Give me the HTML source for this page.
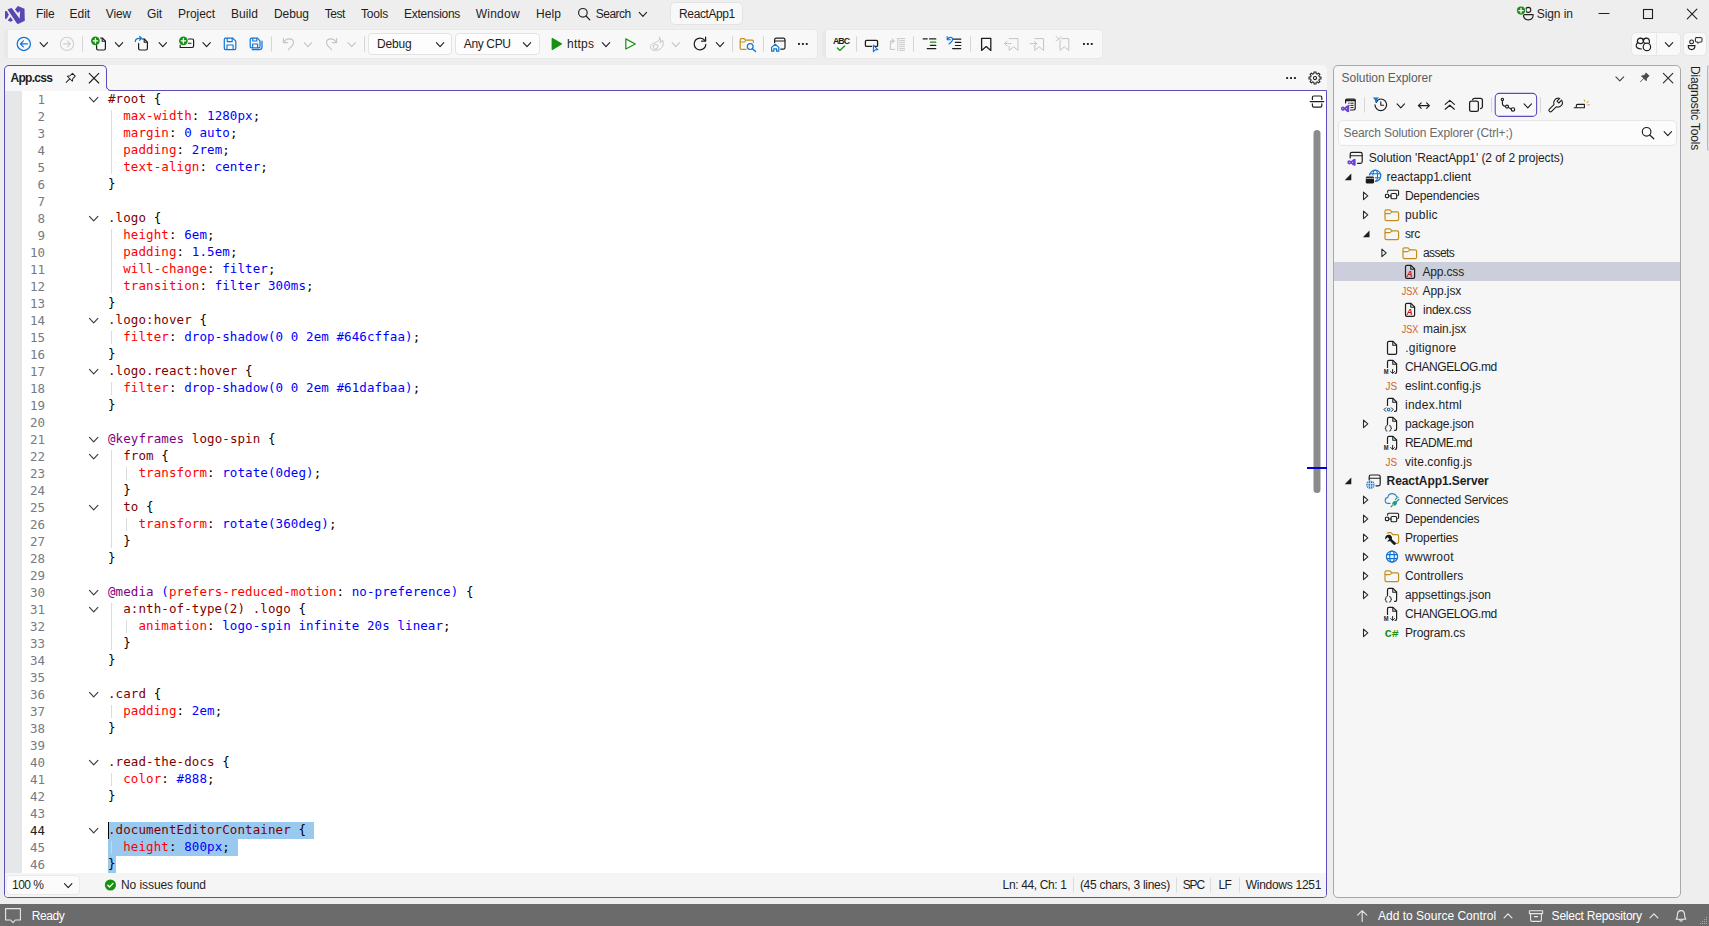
<!DOCTYPE html>
<html lang="en">
<head>
<meta charset="utf-8">
<title>ReactApp1 - App.css</title>
<style>
*{box-sizing:border-box;margin:0;padding:0}
html,body{width:1709px;height:926px;overflow:hidden}
body{position:relative;background:#eeeeee;font-family:"Liberation Sans",sans-serif;font-size:12px;color:#1e1e1e;line-height:1}
.abs{position:absolute}
#ico{position:absolute;left:0;top:0;overflow:visible}
.t{position:absolute;white-space:nowrap;line-height:16px;height:16px;font-size:12px}
.tb{position:absolute;top:30px;height:28px;background:#f8f8f8;box-shadow:0 0 0 1px #e9e9e9;border-radius:3px}
.grip{position:absolute;top:30px;height:28px;width:3px;background:#e8e8e8;border-radius:3px 0 0 3px}
.combo{position:absolute;top:33px;height:22px;background:#fdfdfd;border:1px solid #e4e4e4;border-radius:4px}
#well{left:4px;top:65px;width:1323px;height:833px;background:#f7f7f7;border-radius:5px}
#edframe{left:4px;top:90px;width:1323px;height:808px;border:1px solid #5a4ebc;border-radius:0 0 4px 4px;background:#fff}
#tab{left:4px;top:65px;width:103px;height:26px;background:#f7f7f7;border:1px solid #5a4ebc;border-bottom:none;border-radius:5px 5px 0 0}
#tabfoot{left:106px;top:86px;width:5px;height:5px;overflow:hidden}
#tabfoot i{position:absolute;left:0;top:-5px;width:10px;height:10px;border:1px solid #5a4ebc;border-radius:5px;box-shadow:0 0 0 5px #f7f7f7}
#gutter{left:5px;top:91px;width:17px;height:782px;background:#e6e7e8}
#edstatus{left:5px;top:873px;width:1321px;height:24px;background:#f5f5f5;border-radius:0 0 3px 3px}
#zoom{left:6px;top:875px;width:74px;height:20px;background:#fbfbfb;border:1px solid #e9e9e9;border-radius:4px}
#code,#lnums{font-family:"DejaVu Sans Mono","Liberation Mono",monospace;font-size:12.5px;letter-spacing:0.09px;line-height:17px;white-space:pre}
#code{left:108px;top:89.5px;color:#000}
#lnums{left:0;top:90.5px;width:45.2px;text-align:right;color:#747b83}
#lnums b{font-weight:normal;color:#1e1e1e}
.s{color:#800000}.p{color:#ff0000}.v{color:#0000ff}.a{color:#800080}
.sel{position:absolute;background:#99c9ef}
.guide{position:absolute;width:1px;background:#dcdcdc}
#sx{left:1333px;top:65px;width:348px;height:833px;background:#f6f6f6;border:1px solid #a9a9a9;border-radius:5px}
#sxsearch{left:1338px;top:120px;width:339px;height:26px;background:#fcfcfc;border:1px solid #e6e6e6;border-radius:5px}
#sxsel{left:1334px;top:262px;width:346px;height:19px;background:#cccedb}
#diag{left:1688px;top:66px;writing-mode:vertical-rl;font-size:12px;line-height:14px;color:#1e1e1e;white-space:nowrap;letter-spacing:-0.2px}
#sb{left:0;top:904px;width:1709px;height:22px;background:#6b6b6b}
</style>
</head>
<body>
<!-- menu: project name pill -->
<div class="abs" style="left:670px;top:2px;width:73px;height:23px;background:#f8f8f8;border:1px solid #e3e3e3;border-radius:5px"></div>
<!-- toolbars -->
<div class="tb" style="left:5px;width:812px"></div><div class="grip" style="left:5px"></div>
<div class="tb" style="left:823px;width:279px"></div><div class="grip" style="left:823px"></div>
<div class="combo" style="left:368px;width:84px"></div>
<div class="combo" style="left:455px;width:85px"></div>
<div class="abs" style="left:1631px;top:32px;width:50px;height:24px;background:#f9f9f9;border:1px solid #e6e6e6;border-radius:5px"></div>
<div class="abs" style="left:1656px;top:33px;width:1px;height:22px;background:#e6e6e6"></div>
<div class="abs" style="left:1683px;top:32px;width:24px;height:24px;background:#f9f9f9;border:1px solid #e6e6e6;border-radius:5px"></div>
<!-- document well -->
<div class="abs" id="well"></div>
<div class="abs" id="edframe"></div>
<div class="abs" id="tab"></div>
<div class="abs" id="tabfoot"><i></i></div>
<div class="abs" id="gutter"></div>
<div class="abs" id="edstatus"></div>
<div class="abs" id="zoom"></div>
<div class="sel" style="left:108px;top:822px;width:206px;height:17px"></div>
<div class="sel" style="left:108px;top:839px;width:130px;height:17px"></div>
<div class="sel" style="left:108px;top:856px;width:8px;height:17px"></div>
<div class="abs" style="left:108px;top:822px;width:1px;height:17px;background:#000"></div>
<div class="guide" style="left:111px;top:110px;height:64px"></div>
<div class="guide" style="left:111px;top:229px;height:64px"></div>
<div class="guide" style="left:111px;top:331px;height:13px"></div>
<div class="guide" style="left:111px;top:382px;height:13px"></div>
<div class="guide" style="left:111px;top:450px;height:98px"></div>
<div class="guide" style="left:126px;top:467px;height:13px"></div>
<div class="guide" style="left:126px;top:518px;height:13px"></div>
<div class="guide" style="left:111px;top:603px;height:47px"></div>
<div class="guide" style="left:126px;top:620px;height:13px"></div>
<div class="guide" style="left:111px;top:705px;height:13px"></div>
<div class="guide" style="left:111px;top:773px;height:13px"></div>
<div class="guide" style="left:111px;top:841px;height:13px;background:#c4d8e8"></div>
<div class="abs" id="lnums">1
2
3
4
5
6
7
8
9
10
11
12
13
14
15
16
17
18
19
20
21
22
23
24
25
26
27
28
29
30
31
32
33
34
35
36
37
38
39
40
41
42
43
<b>44</b>
45
46</div>
<div class="abs" id="code"><span class="s">#root</span> {
  <span class="p">max-width</span>: <span class="v">1280px</span>;
  <span class="p">margin</span>: <span class="v">0 auto</span>;
  <span class="p">padding</span>: <span class="v">2rem</span>;
  <span class="p">text-align</span>: <span class="v">center</span>;
}

<span class="s">.logo</span> {
  <span class="p">height</span>: <span class="v">6em</span>;
  <span class="p">padding</span>: <span class="v">1.5em</span>;
  <span class="p">will-change</span>: <span class="v">filter</span>;
  <span class="p">transition</span>: <span class="v">filter 300ms</span>;
}
<span class="s">.logo:hover</span> {
  <span class="p">filter</span>: <span class="v">drop-shadow(0 0 2em #646cffaa)</span>;
}
<span class="s">.logo.react:hover</span> {
  <span class="p">filter</span>: <span class="v">drop-shadow(0 0 2em #61dafbaa)</span>;
}

<span class="a">@keyframes</span> <span class="s">logo-spin</span> {
  <span class="s">from</span> {
    <span class="p">transform</span>: <span class="v">rotate(0deg)</span>;
  }
  <span class="s">to</span> {
    <span class="p">transform</span>: <span class="v">rotate(360deg)</span>;
  }
}

<span class="a">@media</span> <span class="v">(</span><span class="p">prefers-reduced-motion</span>: <span class="v">no-preference)</span> {
  <span class="s">a:nth-of-type(2) .logo</span> {
    <span class="p">animation</span>: <span class="v">logo-spin infinite 20s linear</span>;
  }
}

<span class="s">.card</span> {
  <span class="p">padding</span>: <span class="v">2em</span>;
}

<span class="s">.read-the-docs</span> {
  <span class="p">color</span>: <span class="v">#888</span>;
}

<span class="s">.documentEditorContainer</span> {
  <span class="p">height</span>: <span class="v">800px</span>;
}</div>

<!-- solution explorer -->
<div class="abs" id="sx"></div>
<div class="abs" id="sxsearch"></div>
<div class="abs" id="sxsel"></div>
<div class="abs" id="diag">Diagnostic Tools</div>
<div class="abs" style="left:1707px;top:65px;width:2px;height:86px;background:#dddddd;border-left:1px solid #b9b9b9;border-radius:2px 0 0 2px"></div>
<!-- status bar -->
<div class="abs" id="sb"></div>
<!-- text -->
<span class="t" style="left:36.1px;top:6.3px;letter-spacing:-0.286px">File</span>
<span class="t" style="left:69.6px;top:6.3px;letter-spacing:-0.047px">Edit</span>
<span class="t" style="left:105.7px;top:6.3px;letter-spacing:-0.099px">View</span>
<span class="t" style="left:147.0px;top:6.3px;letter-spacing:-0.081px">Git</span>
<span class="t" style="left:178.0px;top:6.3px;letter-spacing:-0.051px">Project</span>
<span class="t" style="left:230.9px;top:6.3px;letter-spacing:0.062px">Build</span>
<span class="t" style="left:274.1px;top:6.3px;letter-spacing:-0.135px">Debug</span>
<span class="t" style="left:324.8px;top:6.3px;letter-spacing:-0.479px">Test</span>
<span class="t" style="left:361.0px;top:6.3px;letter-spacing:-0.203px">Tools</span>
<span class="t" style="left:404.0px;top:6.3px;letter-spacing:-0.260px">Extensions</span>
<span class="t" style="left:475.7px;top:6.3px;letter-spacing:0.252px">Window</span>
<span class="t" style="left:536.1px;top:6.3px;letter-spacing:0.028px">Help</span>
<span class="t" style="left:595.8px;top:6.3px;letter-spacing:-0.522px">Search</span>
<span class="t" style="left:679.1px;top:6.3px;letter-spacing:-0.397px">ReactApp1</span>
<span class="t" style="left:1536.8px;top:6.3px;letter-spacing:-0.100px">Sign in</span>
<span class="t" style="left:376.9px;top:36.3px;letter-spacing:-0.135px">Debug</span>
<span class="t" style="left:463.8px;top:36.3px;letter-spacing:-0.366px">Any CPU</span>
<span class="t" style="left:567.1px;top:36.3px;letter-spacing:0.197px">https</span>
<span class="t" style="left:833.0px;top:33.2px;letter-spacing:-0.983px;font-size:8.8px;font-weight:bold">ABC</span>
<span class="t" style="left:10.5px;top:69.7px;letter-spacing:-0.712px;font-weight:bold">App.css</span>
<span class="t" style="left:1341.6px;top:69.6px;letter-spacing:-0.052px;color:#5c5c5c">Solution Explorer</span>
<span class="t" style="left:1343.5px;top:124.7px;letter-spacing:-0.121px;color:#6a6a6a">Search Solution Explorer (Ctrl+;)</span>
<span class="t" style="left:12.0px;top:876.6px;letter-spacing:-0.526px">100 %</span>
<span class="t" style="left:121.0px;top:876.6px;letter-spacing:-0.077px">No issues found</span>
<span class="t" style="left:1002.6px;top:876.6px;letter-spacing:-0.363px">Ln: 44, Ch: 1</span>
<span class="t" style="left:1079.9px;top:876.6px;letter-spacing:-0.283px">(45 chars, 3 lines)</span>
<span class="t" style="left:1182.7px;top:876.6px;letter-spacing:-1.129px">SPC</span>
<span class="t" style="left:1218.6px;top:876.6px;letter-spacing:-0.658px">LF</span>
<span class="t" style="left:1245.7px;top:876.6px;letter-spacing:-0.277px">Windows 1251</span>
<span class="t" style="left:31.8px;top:907.6px;letter-spacing:-0.438px;color:#ffffff">Ready</span>
<span class="t" style="left:1378.0px;top:907.6px;letter-spacing:0.001px;color:#ffffff">Add to Source Control</span>
<span class="t" style="left:1551.6px;top:907.6px;letter-spacing:-0.220px;color:#ffffff">Select Repository</span>
<span class="t" style="left:1368.8px;top:149.6px;letter-spacing:-0.065px">Solution 'ReactApp1' (2 of 2 projects)</span>
<span class="t" style="left:1386.6px;top:168.6px;letter-spacing:-0.021px">reactapp1.client</span>
<span class="t" style="left:1404.9px;top:187.6px;letter-spacing:-0.203px">Dependencies</span>
<span class="t" style="left:1404.9px;top:206.6px;letter-spacing:0.273px">public</span>
<span class="t" style="left:1404.9px;top:225.6px;letter-spacing:-0.333px">src</span>
<span class="t" style="left:1423.0px;top:244.6px;letter-spacing:-0.581px">assets</span>
<span class="t" style="left:1422.5px;top:263.6px;letter-spacing:-0.170px">App.css</span>
<span class="t" style="left:1422.5px;top:282.6px;letter-spacing:-0.094px">App.jsx</span>
<span class="t" style="left:1423.0px;top:301.6px;letter-spacing:-0.226px">index.css</span>
<span class="t" style="left:1423.0px;top:320.6px;letter-spacing:-0.102px">main.jsx</span>
<span class="t" style="left:1405.3px;top:339.6px;letter-spacing:0.173px">.gitignore</span>
<span class="t" style="left:1404.9px;top:358.6px;letter-spacing:-0.399px">CHANGELOG.md</span>
<span class="t" style="left:1404.9px;top:377.6px;letter-spacing:0.052px">eslint.config.js</span>
<span class="t" style="left:1405.1px;top:396.6px;letter-spacing:0.220px">index.html</span>
<span class="t" style="left:1404.9px;top:415.6px;letter-spacing:-0.152px">package.json</span>
<span class="t" style="left:1404.9px;top:434.6px;letter-spacing:-0.483px">README.md</span>
<span class="t" style="left:1404.9px;top:453.6px;letter-spacing:0.083px">vite.config.js</span>
<span class="t" style="left:1386.6px;top:472.6px;letter-spacing:-0.081px;font-weight:bold">ReactApp1.Server</span>
<span class="t" style="left:1404.9px;top:491.6px;letter-spacing:-0.233px">Connected Services</span>
<span class="t" style="left:1404.9px;top:510.6px;letter-spacing:-0.203px">Dependencies</span>
<span class="t" style="left:1404.9px;top:529.6px;letter-spacing:-0.150px">Properties</span>
<span class="t" style="left:1404.9px;top:548.6px;letter-spacing:0.330px">wwwroot</span>
<span class="t" style="left:1404.9px;top:567.6px;letter-spacing:0.024px">Controllers</span>
<span class="t" style="left:1404.9px;top:586.6px;letter-spacing:-0.040px">appsettings.json</span>
<span class="t" style="left:1404.9px;top:605.6px;letter-spacing:-0.399px">CHANGELOG.md</span>
<span class="t" style="left:1404.9px;top:624.6px;letter-spacing:-0.116px">Program.cs</span>
<!-- icons -->
<svg id="ico" width="1709" height="926" viewBox="0 0 1709 926">
<path d="M5 11.2L6.7 11L8.9 14.8L6.5 19.1L5 18.8Z" fill="#5548b3"/>
<path d="M17.85 5.9L24.5 8.77L24.8 20.87L18.15 24.05L16.94 23.44L7.56 9.38L11.04 8.02L12.1 8.47L19.66 18.75L20.11 11.04L17.85 13L14.97 9.38Z" fill="#5548b3"/>
<path d="M10.44 16.94L13 20.57L10.59 21.78L7.71 20.57Z" fill="#5548b3"/>
<circle cx="582.9" cy="12.8" r="4.3" fill="none" stroke="#1e1e1e" stroke-width="1.15"/>
<path d="M586 16L589.8 19.8" fill="none" stroke="#1e1e1e" stroke-width="1.2" stroke-linecap="round" stroke-linejoin="round"/>
<path d="M639.2 12.4L642.9 16.4L646.6 12.4" fill="none" stroke="#1e1e1e" stroke-width="1.1" stroke-linecap="round" stroke-linejoin="round"/>
<circle cx="1528.3" cy="9.9" r="2.5" fill="none" stroke="#1e1e1e" stroke-width="1.1"/>
<path d="M1523.4 14.6H1533.2C1533.2 18.2 1531 19.9 1528.3 19.9C1525.6 19.9 1523.4 18.2 1523.4 14.6Z" fill="none" stroke="#1e1e1e" stroke-width="1.1" stroke-linecap="round" stroke-linejoin="round"/>
<circle cx="1521" cy="10.6" r="4.9" fill="#eeeeee"/>
<circle cx="1521" cy="10.6" r="4.1" fill="#169212"/>
<path d="M1518.8 10.6H1523.2M1521 8.4V12.8" fill="none" stroke="#fff" stroke-width="1.3" stroke-linecap="round" stroke-linejoin="round"/>
<path d="M1599 13.5H1609" fill="none" stroke="#1e1e1e" stroke-width="1.1" stroke-linecap="round" stroke-linejoin="round"/>
<rect x="1643.5" y="9.5" width="9" height="9" fill="none" stroke="#1e1e1e" stroke-width="1.1"/>
<path d="M1687.3 9.2L1696.9 18.8M1696.9 9.2L1687.3 18.8" fill="none" stroke="#1e1e1e" stroke-width="1.1" stroke-linecap="round" stroke-linejoin="round"/>
<circle cx="23.8" cy="43.9" r="6.6" fill="none" stroke="#0f74d4" stroke-width="1.25"/>
<path d="M27.3 43.9H20.6M23.4 40.9L20.4 43.9L23.4 46.9" fill="none" stroke="#0f74d4" stroke-width="1.25" stroke-linecap="round" stroke-linejoin="round"/>
<path d="M40.1 42.6L43.8 46.6L47.5 42.6" fill="none" stroke="#1e1e1e" stroke-width="1.1" stroke-linecap="round" stroke-linejoin="round"/>
<circle cx="67" cy="43.9" r="6.6" fill="none" stroke="#d0d0d0" stroke-width="1.1"/>
<path d="M63.6 43.9H70.2M67.4 40.9L70.4 43.9L67.4 46.9" fill="none" stroke="#d0d0d0" stroke-width="1.1" stroke-linecap="round" stroke-linejoin="round"/>
<path d="M82.5 36.5V51.5" stroke="#d4d4d4" stroke-width="1" fill="none"/>
<path d="M100.5 38H102.3L105.4 41.2V48.6C105.4 49.4 104.8 50 104 50H98C97.2 50 96.6 49.4 96.6 48.6V45.5" fill="none" stroke="#1e1e1e" stroke-width="1.2" stroke-linecap="round" stroke-linejoin="round"/>
<path d="M102.2 38.2V41.3H105.3" fill="none" stroke="#1e1e1e" stroke-width="1.1" stroke-linecap="round" stroke-linejoin="round"/>
<circle cx="95.4" cy="40.8" r="4.4" fill="#169212"/>
<path d="M93.2 40.8H97.6M95.4 38.6V43.0" fill="none" stroke="#fff" stroke-width="1.3" stroke-linecap="round" stroke-linejoin="round"/>
<path d="M115.3 42.6L119.0 46.6L122.7 42.6" fill="none" stroke="#1e1e1e" stroke-width="1.1" stroke-linecap="round" stroke-linejoin="round"/>
<path d="M142.5 39H144.3L147.4 42.2V48.6C147.4 49.4 146.8 50 146 50H140C139.2 50 138.6 49.4 138.6 48.6V43.5" fill="none" stroke="#1e1e1e" stroke-width="1.2" stroke-linecap="round" stroke-linejoin="round"/>
<path d="M144.2 39.2V42.3H147.3" fill="none" stroke="#1e1e1e" stroke-width="1.1" stroke-linecap="round" stroke-linejoin="round"/>
<path d="M135.3 41.6C135.3 39.6 136.8 38.3 139.2 38.3H141.4M139.6 36.4L141.6 38.3L139.6 40.2" fill="none" stroke="#0f74d4" stroke-width="1.2" stroke-linecap="round" stroke-linejoin="round"/>
<path d="M159.1 42.6L162.8 46.6L166.5 42.6" fill="none" stroke="#1e1e1e" stroke-width="1.1" stroke-linecap="round" stroke-linejoin="round"/>
<path d="M188.5 39H192.2C193 39 193.6 39.6 193.6 40.4V46.1C193.6 46.9 193 47.5 192.2 47.5H180.2V45.2" fill="none" stroke="#1e1e1e" stroke-width="1.2" stroke-linecap="round" stroke-linejoin="round"/>
<path d="M188.5 43.2H191" fill="none" stroke="#1e1e1e" stroke-width="1.1" stroke-linecap="round" stroke-linejoin="round"/>
<circle cx="183.4" cy="40.8" r="4.4" fill="#169212"/>
<path d="M181.2 40.8H185.6M183.4 38.6V43.0" fill="none" stroke="#fff" stroke-width="1.3" stroke-linecap="round" stroke-linejoin="round"/>
<path d="M202.9 42.6L206.6 46.6L210.3 42.6" fill="none" stroke="#1e1e1e" stroke-width="1.1" stroke-linecap="round" stroke-linejoin="round"/>
<path d="M225.7 38.2H232.8L235.8 41.2V48.2C235.8 49.0 235.2 49.6 234.4 49.6H225.7C224.9 49.6 224.3 49.0 224.3 48.2V39.6C224.3 38.8 224.9 38.2 225.7 38.2Z" fill="none" stroke="#0f74d4" stroke-width="1.2" stroke-linecap="round" stroke-linejoin="round"/>
<path d="M227.2 38.4V41.6H232.2V38.4" fill="none" stroke="#0f74d4" stroke-width="1.1" stroke-linecap="round" stroke-linejoin="round"/>
<path d="M227.0 49.4V45.0H233.1V49.4" fill="none" stroke="#0f74d4" stroke-width="1.1" stroke-linecap="round" stroke-linejoin="round"/>
<path d="M251.6 38.2H257.4L260 40.8V46.4C260 47.2 259.4 47.8 258.6 47.8H251.6C250.8 47.8 250.2 47.2 250.2 46.4V39.6C250.2 38.8 250.8 38.2 251.6 38.2Z" fill="none" stroke="#0f74d4" stroke-width="1.2" stroke-linecap="round" stroke-linejoin="round"/>
<path d="M252.8 38.4V41H256.8V38.4M252.6 47.6V44H257.6V47.6" fill="none" stroke="#0f74d4" stroke-width="1.1" stroke-linecap="round" stroke-linejoin="round"/>
<path d="M252.3 49.7H259.3C260.9 49.7 262 48.6 262 47V41.2" fill="none" stroke="#0f74d4" stroke-width="1.2" stroke-linecap="round" stroke-linejoin="round"/>
<path d="M271.5 36.5V51.5" stroke="#d4d4d4" stroke-width="1" fill="none"/>
<path d="M283.4 38.6V42.6H287.4M283.6 42.4C285 40 287 38.8 289.2 38.8C291.8 38.8 293.5 40.6 293.5 42.8C293.5 44.4 292.7 45.4 291.4 46.7L288.3 49.6" fill="none" stroke="#c4c4c4" stroke-width="1.15" stroke-linecap="round" stroke-linejoin="round"/>
<path d="M304.2 42.6L307.9 46.6L311.6 42.6" fill="none" stroke="#c4c4c4" stroke-width="1.1" stroke-linecap="round" stroke-linejoin="round"/>
<path d="M336.6 38.6V42.6H332.6M336.4 42.4C335 40 333 38.8 330.8 38.8C328.2 38.8 326.5 40.6 326.5 42.8C326.5 44.4 327.3 45.4 328.6 46.7L331.7 49.6" fill="none" stroke="#c4c4c4" stroke-width="1.15" stroke-linecap="round" stroke-linejoin="round"/>
<path d="M348.0 42.6L351.7 46.6L355.4 42.6" fill="none" stroke="#c4c4c4" stroke-width="1.1" stroke-linecap="round" stroke-linejoin="round"/>
<path d="M364.5 36.5V51.5" stroke="#d4d4d4" stroke-width="1" fill="none"/>
<path d="M436.4 42.6L440.1 46.6L443.8 42.6" fill="none" stroke="#1e1e1e" stroke-width="1.1" stroke-linecap="round" stroke-linejoin="round"/>
<path d="M523.3 42.6L527.0 46.6L530.7 42.6" fill="none" stroke="#1e1e1e" stroke-width="1.1" stroke-linecap="round" stroke-linejoin="round"/>
<path d="M551.6 38.6C551.6 38 552.2 37.7 552.7 38L561.6 43.3C562.1 43.6 562.1 44.3 561.6 44.6L552.7 49.9C552.2 50.2 551.6 49.9 551.6 49.3Z" fill="#169212"/>
<path d="M602.3 42.6L606.0 46.6L609.7 42.6" fill="none" stroke="#1e1e1e" stroke-width="1.1" stroke-linecap="round" stroke-linejoin="round"/>
<path d="M625.8 38.9V49L635.3 43.95Z" fill="none" stroke="#169212" stroke-width="1.2" stroke-linecap="round" stroke-linejoin="round"/>
<path d="M659.4 37.2C660.6 39.4 658.6 41 656.4 42C653.4 43.4 650.4 44.6 650.4 47.4C650.4 49.4 652.4 50.4 655.2 50.4C659.8 50.4 663.2 47.6 663.2 43.4C663.2 41.6 662.6 40.2 662.6 40.2C662.2 41.4 661.2 42.4 660.2 42.6C661 40.6 660.8 38.6 659.4 37.2Z" fill="none" stroke="#c4c4c4" stroke-width="1.0" stroke-linecap="round" stroke-linejoin="round"/>
<circle cx="655.6" cy="46.8" r="2.3" fill="none" stroke="#c4c4c4" stroke-width="1.0"/>
<path d="M672.1 42.6L675.8 46.6L679.5 42.6" fill="none" stroke="#c4c4c4" stroke-width="1.1" stroke-linecap="round" stroke-linejoin="round"/>
<path d="M705 40.6C703.9 39 702.1 38 700 38C696.6 38 694.2 40.6 694.2 43.9C694.2 47.2 696.7 49.8 700 49.8C703.3 49.8 705.7 47.3 705.8 44.4" fill="none" stroke="#1e1e1e" stroke-width="1.25" stroke-linecap="round" stroke-linejoin="round"/>
<path d="M705.6 37.2V41.2H701.6" fill="none" stroke="#1e1e1e" stroke-width="1.25" stroke-linecap="round" stroke-linejoin="round"/>
<path d="M716.3 42.6L720.0 46.6L723.7 42.6" fill="none" stroke="#1e1e1e" stroke-width="1.1" stroke-linecap="round" stroke-linejoin="round"/>
<path d="M732.5 36.5V51.5" stroke="#d4d4d4" stroke-width="1" fill="none"/>
<path d="M746 49.4H741.4C740.7 49.4 740.2 48.9 740.2 48.2V39.8C740.2 39.1 740.7 38.6 741.4 38.6H744.2L745.8 40.2H752.2C752.9 40.2 753.4 40.7 753.4 41.4V42.4" fill="none" stroke="#c48e1f" stroke-width="1.2" stroke-linecap="round" stroke-linejoin="round"/>
<path d="M740.4 42H744.4L745.8 40.4" fill="none" stroke="#c48e1f" stroke-width="1.1" stroke-linecap="round" stroke-linejoin="round"/>
<circle cx="750.2" cy="46.6" r="2.9" fill="none" stroke="#0f74d4" stroke-width="1.2"/>
<path d="M752.4 48.8L755.6 51.6" fill="none" stroke="#0f74d4" stroke-width="1.3" stroke-linecap="round" stroke-linejoin="round"/>
<path d="M763.5 36.5V51.5" stroke="#d4d4d4" stroke-width="1" fill="none"/>
<path d="M774.6 42.6V40C774.6 39 775.4 38.2 776.4 38.2H783.2C784.2 38.2 785 39 785 40V47.4C785 48.4 784.2 49.2 783.2 49.2H780.8" fill="none" stroke="#1e1e1e" stroke-width="1.2" stroke-linecap="round" stroke-linejoin="round"/>
<path d="M774.8 41H784.8" fill="none" stroke="#1e1e1e" stroke-width="1.1" stroke-linecap="round" stroke-linejoin="round"/>
<path d="M771.6 47.4L775.2 44.2L778.8 47.4V51.2H776.6V48.8H773.8V51.2H771.6Z" fill="none" stroke="#0f74d4" stroke-width="1.2" stroke-linecap="round" stroke-linejoin="round"/>
<rect x="798.0" y="43.0" width="1.9" height="1.9" fill="#1e1e1e"/>
<rect x="801.9" y="43.0" width="1.9" height="1.9" fill="#1e1e1e"/>
<rect x="805.8" y="43.0" width="1.9" height="1.9" fill="#1e1e1e"/>
<path d="M837.4 48L839.8 50.4L844.6 46" fill="none" stroke="#169212" stroke-width="1.3" stroke-linecap="round" stroke-linejoin="round"/>
<path d="M856.5 36.5V51.5" stroke="#d4d4d4" stroke-width="1" fill="none"/>
<path d="M866.6 40.4H876.4C877.1 40.4 877.6 40.9 877.6 41.6V45.2C877.6 45.9 877.1 46.4 876.4 46.4H875M871.6 46.4H866.6C865.9 46.4 865.4 45.9 865.4 45.2V41.6C865.4 40.9 865.9 40.4 866.6 40.4" fill="none" stroke="#1e1e1e" stroke-width="1.3" stroke-linecap="round" stroke-linejoin="round"/>
<path d="M873.4 45.2V51.6L875.2 49.8H877.9Z" fill="none" stroke="#0f74d4" stroke-width="1.1" stroke-linecap="round" stroke-linejoin="round"/>
<path d="M894.6 49.4H890.4V41.4H892.6M892 38.6L894.4 41L892 43.4M890.6 41H894.2" fill="none" stroke="#c4c4c4" stroke-width="1.0" stroke-linecap="round" stroke-linejoin="round"/>
<path d="M897.6 38.6H904.6M899.6 40.6H904.6M899.6 42.6H904.6M899.6 44.6H904.6M899.6 46.6H904.6M899.6 48.6H904.6M899.6 50.4H904.6M897.8 38.8V50.6" fill="none" stroke="#c4c4c4" stroke-width="0.9" stroke-linecap="round" stroke-linejoin="round"/>
<path d="M913.5 36.5V51.5" stroke="#d4d4d4" stroke-width="1" fill="none"/>
<path d="M923.2 38.9H927.2M929.6 38.9H935.8M930.4 45.4H935.8M927.2 48.6H935.8" fill="none" stroke="#1e1e1e" stroke-width="1.2" stroke-linecap="round" stroke-linejoin="round"/>
<path d="M930.4 42.2H935.8" fill="none" stroke="#169212" stroke-width="1.2" stroke-linecap="round" stroke-linejoin="round"/>
<path d="M953.4 39.2H960.8M955.4 42.4H960.8M955.4 45.5H960.8M952.6 48.6H960.8" fill="none" stroke="#1e1e1e" stroke-width="1.2" stroke-linecap="round" stroke-linejoin="round"/>
<path d="M947.2 36.6V39.8H950.4M947.4 39.6C948.2 38.2 949.2 37.4 950.4 37.4C951.8 37.4 952.6 38.4 952.6 39.4C952.6 40.4 952 41.2 951.2 42L949 44" fill="none" stroke="#0f74d4" stroke-width="1.1" stroke-linecap="round" stroke-linejoin="round"/>
<path d="M970.5 36.5V51.5" stroke="#d4d4d4" stroke-width="1" fill="none"/>
<path d="M981.6 38.4H990.8V50.4L986.2 46.6L981.6 50.4Z" fill="none" stroke="#1e1e1e" stroke-width="1.3" stroke-linecap="round" stroke-linejoin="round"/>
<path d="M1009.2 38.6H1018V50.4L1013.6 46.8L1009.2 50.4V46.4" fill="none" stroke="#c4c4c4" stroke-width="1.0" stroke-linecap="round" stroke-linejoin="round"/>
<path d="M1004.6 43.6H1011M1007 41.2L1004.6 43.6L1007 46" fill="none" stroke="#c4c4c4" stroke-width="1.0" stroke-linecap="round" stroke-linejoin="round"/>
<path d="M1034.8 38.6H1043.6V50.4L1039.2 46.8L1034.8 50.4V46.4" fill="none" stroke="#c4c4c4" stroke-width="1.0" stroke-linecap="round" stroke-linejoin="round"/>
<path d="M1030.2 43.6H1036.6M1034.2 41.2L1036.6 43.6L1034.2 46" fill="none" stroke="#c4c4c4" stroke-width="1.0" stroke-linecap="round" stroke-linejoin="round"/>
<path d="M1061.6 38.6H1068.8V50.4L1064.4 46.8L1060 50.4V42" fill="none" stroke="#c4c4c4" stroke-width="1.0" stroke-linecap="round" stroke-linejoin="round"/>
<path d="M1056.2 36.6L1061 41.4M1061 36.6L1056.2 41.4" fill="none" stroke="#c4c4c4" stroke-width="1.0" stroke-linecap="round" stroke-linejoin="round"/>
<rect x="1083.0" y="43.0" width="1.9" height="1.9" fill="#1e1e1e"/>
<rect x="1086.9" y="43.0" width="1.9" height="1.9" fill="#1e1e1e"/>
<rect x="1090.8" y="43.0" width="1.9" height="1.9" fill="#1e1e1e"/>
<path d="M1640.6 38.2C1642 38.2 1643.2 39.2 1643.4 40.6C1643.6 39.2 1644.8 38.2 1646.2 38.2C1648.2 38.2 1649.4 39.6 1649.4 41.4V42.4M1640.6 38.2C1638.6 38.2 1637.4 39.6 1637.4 41.4V43C1636.6 43.8 1636.2 44.8 1636.2 45.8C1636.2 47.6 1638.4 48.8 1641.4 49" fill="none" stroke="#1e1e1e" stroke-width="1.2" stroke-linecap="round" stroke-linejoin="round"/>
<path d="M1640.6 38.2C1642.2 38.2 1643.4 39.4 1643.4 41C1643.4 42.6 1642.2 43.6 1640.6 43.6C1639 43.6 1637.6 42.8 1637.4 41.4" fill="none" stroke="#1e1e1e" stroke-width="1.1" stroke-linecap="round" stroke-linejoin="round"/>
<path d="M1646.2 38.2C1644.6 38.2 1643.4 39.4 1643.4 41C1643.4 42 1643.9 42.8 1644.8 43.2" fill="none" stroke="#1e1e1e" stroke-width="1.1" stroke-linecap="round" stroke-linejoin="round"/>
<circle cx="1646.9" cy="46.9" r="3.7" fill="#f9f9f9" stroke="#1e1e1e" stroke-width="1.2"/>
<path d="M1665.3 42.6L1669.0 46.6L1672.7 42.6" fill="none" stroke="#1e1e1e" stroke-width="1.1" stroke-linecap="round" stroke-linejoin="round"/>
<circle cx="1691.6" cy="41.9" r="1.9" fill="none" stroke="#1e1e1e" stroke-width="1.1"/>
<path d="M1688.2 45.6H1695C1695 48 1693.6 49.6 1691.6 49.6C1689.6 49.6 1688.2 48 1688.2 45.6Z" fill="none" stroke="#1e1e1e" stroke-width="1.1" stroke-linecap="round" stroke-linejoin="round"/>
<path d="M1696.2 37.6H1701.2C1701.7 37.6 1702 37.9 1702 38.4V41.2C1702 41.7 1701.7 42 1701.2 42H1699.4L1698 43.4V42H1696.2C1695.7 42 1695.4 41.7 1695.4 41.2V38.4C1695.4 37.9 1695.7 37.6 1696.2 37.6Z" fill="none" stroke="#1e1e1e" stroke-width="1.0" stroke-linecap="round" stroke-linejoin="round"/>
<g transform="translate(70.2 78.4) rotate(45) scale(0.86)"><path d="M-2.3 -6H2.3V-2L4.1 0.6H-4.1L-2.3 -2ZM0 0.8V6.6" fill="none" stroke="#1e1e1e" stroke-width="1.1" stroke-linecap="round" stroke-linejoin="round"/>
</g><path d="M89.2 73.4L98.8 83M98.8 73.4L89.2 83" fill="none" stroke="#1e1e1e" stroke-width="1.1" stroke-linecap="round" stroke-linejoin="round"/>
<rect x="1286.2" y="77.1" width="1.9" height="1.9" fill="#1e1e1e"/>
<rect x="1290.1" y="77.1" width="1.9" height="1.9" fill="#1e1e1e"/>
<rect x="1294.0" y="77.1" width="1.9" height="1.9" fill="#1e1e1e"/>
<path d="M1321.01 76.95L1321.01 79.05L1319.38 79.05L1318.84 80.35L1319.99 81.51L1318.51 82.99L1317.35 81.84L1316.05 82.38L1316.05 84.01L1313.95 84.01L1313.95 82.38L1312.65 81.84L1311.49 82.99L1310.01 81.51L1311.16 80.35L1310.62 79.05L1308.99 79.05L1308.99 76.95L1310.62 76.95L1311.16 75.65L1310.01 74.49L1311.49 73.01L1312.65 74.16L1313.95 73.62L1313.95 71.99L1316.05 71.99L1316.05 73.62L1317.35 74.16L1318.51 73.01L1319.99 74.49L1318.84 75.65L1319.38 76.95Z" fill="none" stroke="#1e1e1e" stroke-width="1.05" stroke-linecap="round" stroke-linejoin="round"/>
<circle cx="1315" cy="78" r="1.6" fill="none" stroke="#1e1e1e" stroke-width="1.05"/>
<path d="M1312.4 99.4V97.4C1312.4 96.6 1313 96 1313.8 96H1320.4C1321.2 96 1321.8 96.6 1321.8 97.4V99.4M1312.4 103.8V105.8C1312.4 106.6 1313 107.2 1313.8 107.2H1320.4C1321.2 107.2 1321.8 106.6 1321.8 105.8V103.8" fill="none" stroke="#1e1e1e" stroke-width="1.2" stroke-linecap="round" stroke-linejoin="round"/>
<path d="M1310.2 101.6H1323.8" fill="none" stroke="#1e1e1e" stroke-width="1.1" stroke-linecap="round" stroke-linejoin="round"/>
<rect x="1313.5" y="130" width="7" height="363" rx="3.5" fill="#8b8b8b"/>
<rect x="1307" y="467" width="20" height="2" fill="#0000d0"/>
<path d="M89.5 97.4L93.7 101.8L97.9 97.4" fill="none" stroke="#3b3b3b" stroke-width="1.15" stroke-linecap="round" stroke-linejoin="round"/>
<path d="M89.5 216.4L93.7 220.8L97.9 216.4" fill="none" stroke="#3b3b3b" stroke-width="1.15" stroke-linecap="round" stroke-linejoin="round"/>
<path d="M89.5 318.4L93.7 322.8L97.9 318.4" fill="none" stroke="#3b3b3b" stroke-width="1.15" stroke-linecap="round" stroke-linejoin="round"/>
<path d="M89.5 369.4L93.7 373.8L97.9 369.4" fill="none" stroke="#3b3b3b" stroke-width="1.15" stroke-linecap="round" stroke-linejoin="round"/>
<path d="M89.5 437.4L93.7 441.8L97.9 437.4" fill="none" stroke="#3b3b3b" stroke-width="1.15" stroke-linecap="round" stroke-linejoin="round"/>
<path d="M89.5 454.4L93.7 458.8L97.9 454.4" fill="none" stroke="#3b3b3b" stroke-width="1.15" stroke-linecap="round" stroke-linejoin="round"/>
<path d="M89.5 505.4L93.7 509.8L97.9 505.4" fill="none" stroke="#3b3b3b" stroke-width="1.15" stroke-linecap="round" stroke-linejoin="round"/>
<path d="M89.5 590.4L93.7 594.8L97.9 590.4" fill="none" stroke="#3b3b3b" stroke-width="1.15" stroke-linecap="round" stroke-linejoin="round"/>
<path d="M89.5 607.4L93.7 611.8L97.9 607.4" fill="none" stroke="#3b3b3b" stroke-width="1.15" stroke-linecap="round" stroke-linejoin="round"/>
<path d="M89.5 692.4L93.7 696.8L97.9 692.4" fill="none" stroke="#3b3b3b" stroke-width="1.15" stroke-linecap="round" stroke-linejoin="round"/>
<path d="M89.5 760.4L93.7 764.8L97.9 760.4" fill="none" stroke="#3b3b3b" stroke-width="1.15" stroke-linecap="round" stroke-linejoin="round"/>
<path d="M89.5 828.4L93.7 832.8L97.9 828.4" fill="none" stroke="#3b3b3b" stroke-width="1.15" stroke-linecap="round" stroke-linejoin="round"/>
<path d="M64.5 883.6L68.2 887.6L71.9 883.6" fill="none" stroke="#1e1e1e" stroke-width="1.1" stroke-linecap="round" stroke-linejoin="round"/>
<circle cx="110.4" cy="885" r="5.6" fill="#169212"/>
<path d="M107.8 885.2L109.6 887L113 883.4" fill="none" stroke="#fff" stroke-width="1.3" stroke-linecap="round" stroke-linejoin="round"/>
<path d="M1073.5 877.5V892.5" stroke="#dcdcdc" stroke-width="1" fill="none"/>
<path d="M1176.5 877.5V892.5" stroke="#dcdcdc" stroke-width="1" fill="none"/>
<path d="M1210.5 877.5V892.5" stroke="#dcdcdc" stroke-width="1" fill="none"/>
<path d="M1239.5 877.5V892.5" stroke="#dcdcdc" stroke-width="1" fill="none"/>
<path d="M5.6 908.6H20.4V920H15.4L13 922.6L10.6 920H5.6Z" fill="none" stroke="#e8e8e8" stroke-width="1.1" stroke-linecap="round" stroke-linejoin="round"/>
<path d="M1362.2 921.4V910.8M1357.6 915.2L1362.2 910.6L1366.8 915.2" fill="none" stroke="#e0e0e0" stroke-width="1.2" stroke-linecap="round" stroke-linejoin="round"/>
<path d="M1504.1 917.8L1508.0 913.8L1511.9 917.8" fill="none" stroke="#e8e8e8" stroke-width="1.2" stroke-linecap="round" stroke-linejoin="round"/>
<path d="M1529.4 910.8H1542.6V913.6H1529.4ZM1530.6 913.8V920C1530.6 920.8 1531.2 921.4 1532 921.4H1540C1540.8 921.4 1541.4 920.8 1541.4 920V913.8M1534.4 916.6H1537.6" fill="none" stroke="#e8e8e8" stroke-width="1.1" stroke-linecap="round" stroke-linejoin="round"/>
<path d="M1650.0 917.8L1653.9 913.8L1657.8 917.8" fill="none" stroke="#e8e8e8" stroke-width="1.2" stroke-linecap="round" stroke-linejoin="round"/>
<path d="M1676.2 919.2C1677.4 918 1677.4 916.6 1677.4 915C1677.4 912.4 1678.8 910.6 1681 910.6C1683.2 910.6 1684.6 912.4 1684.6 915C1684.6 916.6 1684.6 918 1685.8 919.2ZM1679.6 919.6C1679.8 920.6 1680.3 921.2 1681 921.2C1681.7 921.2 1682.2 920.6 1682.4 919.6" fill="none" stroke="#e8e8e8" stroke-width="1.1" stroke-linecap="round" stroke-linejoin="round"/>
<rect x="1706" y="917" width="1" height="1" fill="#a9a9a9"/>
<rect x="1704" y="919" width="1" height="1" fill="#a9a9a9"/>
<rect x="1706" y="919" width="1" height="1" fill="#a9a9a9"/>
<rect x="1702" y="921" width="1" height="1" fill="#a9a9a9"/>
<rect x="1704" y="921" width="1" height="1" fill="#a9a9a9"/>
<rect x="1706" y="921" width="1" height="1" fill="#a9a9a9"/>
<rect x="1700" y="923" width="1" height="1" fill="#a9a9a9"/>
<rect x="1702" y="923" width="1" height="1" fill="#a9a9a9"/>
<rect x="1704" y="923" width="1" height="1" fill="#a9a9a9"/>
<rect x="1706" y="923" width="1" height="1" fill="#a9a9a9"/>
<path d="M1615.9 76.8L1619.8 80.8L1623.7 76.8" fill="none" stroke="#424242" stroke-width="1.1" stroke-linecap="round" stroke-linejoin="round"/>
<g transform="translate(1644.2 78) rotate(45) scale(0.82)"><path d="M-2.3 -6H2.3V-2L4.1 0.6H-4.1L-2.3 -2ZM0 0.8V6.6" fill="#4a4a4a" stroke="#4a4a4a" stroke-width="1.0" stroke-linecap="round" stroke-linejoin="round"/>
</g><path d="M1663.4 73.4L1672.8 82.8M1672.8 73.4L1663.4 82.8" fill="none" stroke="#2a2a2a" stroke-width="1.1" stroke-linecap="round" stroke-linejoin="round"/>
<path d="M1345.6 103V100.6C1345.6 99.8 1346.2 99.2 1347 99.2H1353.8C1354.6 99.2 1355.2 99.8 1355.2 100.6V108.6C1355.2 109.4 1354.6 110 1353.8 110H1350.6" fill="none" stroke="#1e1e1e" stroke-width="1.2" stroke-linecap="round" stroke-linejoin="round"/>
<path d="M1345.8 100.4H1355" fill="none" stroke="#1e1e1e" stroke-width="1.6" stroke-linecap="round" stroke-linejoin="round"/>
<path d="M1348.6 103.2H1349.2M1350.8 103.2H1353.2M1348.6 105.4H1349.2M1350.8 105.4H1353.2M1350.8 107.6H1353.2" fill="none" stroke="#1e1e1e" stroke-width="1.0" stroke-linecap="round" stroke-linejoin="round"/>
<path d="M1341.7 108.7C1341.7 107.0 1343.7 106.8 1344.2 108.7C1343.7 110.6 1341.7 110.4 1341.7 108.7Z" fill="none" stroke="#6c3fd6" stroke-width="1.5" stroke-linecap="round" stroke-linejoin="round"/>
<path d="M1344.4 108.7L1347.4 106.2V111.2Z" fill="none" stroke="#6c3fd6" stroke-width="1.5" stroke-linecap="round" stroke-linejoin="round"/>
<path d="M1348.4 106.0V111.4" fill="none" stroke="#6c3fd6" stroke-width="1.6" stroke-linecap="round" stroke-linejoin="round"/>
<path d="M1364.5 97.5V112.5" stroke="#d6d6d6" stroke-width="1" fill="none"/>
<path d="M1376.2 102.4C1377.2 100.4 1378.8 99 1380.8 99C1384 99 1386.6 101.6 1386.6 104.8C1386.6 108 1384 110.6 1380.8 110.6C1377.6 110.6 1375 108 1375 104.8" fill="none" stroke="#1e1e1e" stroke-width="1.2" stroke-linecap="round" stroke-linejoin="round"/>
<path d="M1380.8 101.8V105.2H1383.6" fill="none" stroke="#1e1e1e" stroke-width="1.1" stroke-linecap="round" stroke-linejoin="round"/>
<path d="M1372.8 97.4H1379L1376.8 100V103L1375 101.6V100Z" fill="#0f74d4"/>
<path d="M1397.1 103.9L1400.8 107.9L1404.5 103.9" fill="none" stroke="#1e1e1e" stroke-width="1.1" stroke-linecap="round" stroke-linejoin="round"/>
<path d="M1418.4 105.6H1429.4M1421.2 102.8L1418.4 105.6L1421.2 108.4M1426.6 102.8L1429.4 105.6L1426.6 108.4" fill="none" stroke="#1e1e1e" stroke-width="1.15" stroke-linecap="round" stroke-linejoin="round"/>
<path d="M1445.2 104.4L1449.8 100.4L1454.4 104.4M1445.2 109.2L1449.8 105.2L1454.4 109.2" fill="none" stroke="#1e1e1e" stroke-width="1.2" stroke-linecap="round" stroke-linejoin="round"/>
<rect x="1469.6" y="101.2" width="8.8" height="10.2" rx="1.9" fill="none" stroke="#1e1e1e" stroke-width="1.25"/>
<path d="M1472.6 99.6C1472.9 98.9 1473.6 98.4 1474.4 98.4H1480.4C1481.5 98.4 1482.4 99.3 1482.4 100.4V106.6C1482.4 107.6 1481.7 108.4 1480.6 108.6" fill="none" stroke="#1e1e1e" stroke-width="1.25" stroke-linecap="round" stroke-linejoin="round"/>
<path d="M1491.5 97.5V112.5" stroke="#d6d6d6" stroke-width="1" fill="none"/>
<rect x="1495.2" y="93.4" width="41.4" height="23" rx="4" fill="#f9f9f9" stroke="#5a4ebc" stroke-width="1.1"/>
<circle cx="1502.4" cy="99.6" r="1.2" fill="none" stroke="#1e1e1e" stroke-width="1.1"/>
<circle cx="1513" cy="109.4" r="1.7" fill="none" stroke="#1e1e1e" stroke-width="1.15"/>
<path d="M1502.4 101V103.4C1502.4 105.4 1503.6 106 1505.2 106.2M1508.6 107.4C1509.6 108 1510.4 108.8 1511.2 109.2" fill="none" stroke="#1e1e1e" stroke-width="1.15" stroke-linecap="round" stroke-linejoin="round"/>
<circle cx="1507" cy="106.6" r="1.5" fill="none" stroke="#1e1e1e" stroke-width="1.1"/>
<path d="M1524.1 103.9L1527.8 107.9L1531.5 103.9" fill="none" stroke="#1e1e1e" stroke-width="1.1" stroke-linecap="round" stroke-linejoin="round"/>
<path d="M1540.5 97.5V112.5" stroke="#d6d6d6" stroke-width="1" fill="none"/>
<path d="M1561.6 100.2L1558.8 103L1557 101.2L1559.8 98.4C1558 97.8 1556 98.4 1554.8 99.8C1553.6 101.2 1553.4 103 1554 104.6L1549.4 109.2C1548.8 109.8 1548.8 110.8 1549.4 111.4C1550 112 1551 112 1551.6 111.4L1556.2 106.8C1557.8 107.4 1559.8 107 1561.2 105.6C1562.6 104.2 1562.8 102 1561.6 100.2Z" fill="none" stroke="#1e1e1e" stroke-width="1.1" stroke-linecap="round" stroke-linejoin="round"/>
<path d="M1574.2 107.8H1584.4V104.4H1577.6C1576.8 104.4 1576.3 105 1576.3 105.8V107.6" fill="none" stroke="#1e1e1e" stroke-width="1.1" stroke-linecap="round" stroke-linejoin="round"/>
<path d="M1584.8 101.6L1584.2 99.8M1586.8 102.6L1588.4 101.4M1587.6 104.8H1589.6" fill="none" stroke="#d8a31a" stroke-width="0.9" stroke-linecap="round" stroke-linejoin="round"/>
<circle cx="1646.6" cy="131.8" r="4.3" fill="none" stroke="#1e1e1e" stroke-width="1.15"/>
<path d="M1649.8 135L1653.8 138.8" fill="none" stroke="#1e1e1e" stroke-width="1.2" stroke-linecap="round" stroke-linejoin="round"/>
<path d="M1664.1 131.7L1667.8 135.7L1671.5 131.7" fill="none" stroke="#1e1e1e" stroke-width="1.1" stroke-linecap="round" stroke-linejoin="round"/>
<path d="M1350.2 158V154.2C1350.2 153.2 1351 152.4 1352 152.4H1360.4C1361.4 152.4 1362.2 153.2 1362.2 154.2V161.6C1362.2 162.6 1361.4 163.4 1360.4 163.4H1357.6" fill="none" stroke="#1e1e1e" stroke-width="1.2" stroke-linecap="round" stroke-linejoin="round"/>
<path d="M1350.4 155.8H1362" fill="none" stroke="#1e1e1e" stroke-width="1.1" stroke-linecap="round" stroke-linejoin="round"/>
<path d="M1348.1 162.3C1348.1 160.6 1350.1 160.4 1350.6 162.3C1350.1 164.2 1348.1 164 1348.1 162.3Z" fill="none" stroke="#6c3fd6" stroke-width="1.5" stroke-linecap="round" stroke-linejoin="round"/>
<path d="M1350.8 162.3L1353.8 159.8V164.8Z" fill="none" stroke="#6c3fd6" stroke-width="1.5" stroke-linecap="round" stroke-linejoin="round"/>
<path d="M1354.8 159.6V165" fill="none" stroke="#6c3fd6" stroke-width="1.6" stroke-linecap="round" stroke-linejoin="round"/>
<path d="M1351.3 173.6V180.2H1344.7Z" fill="#1e1e1e"/>
<circle cx="1375.2" cy="175.8" r="5.6" fill="none" stroke="#0f74d4" stroke-width="1.2"/>
<ellipse cx="1375.2" cy="175.8" rx="2.35" ry="5.6" fill="none" stroke="#0f74d4" stroke-width="1.08"/>
<path d="M1370.2 173.8H1380.2M1370.2 177.8H1380.2" fill="none" stroke="#0f74d4" stroke-width="1.08" stroke-linecap="round" stroke-linejoin="round"/>
<rect x="1365" y="175.6" width="9.8" height="8.6" rx="1.6" fill="#f6f6f6"/>
<rect x="1365.8" y="176.4" width="8.2" height="7.2" rx="1.4" fill="#1a1a1a"/>
<path d="M1366.2 178.4H1373.6" fill="none" stroke="#f6f6f6" stroke-width="0.7" stroke-linecap="round" stroke-linejoin="round"/>
<path d="M1363.5 192.1V199.7L1367.8 195.9Z" fill="none" stroke="#2b2b2b" stroke-width="1.1" stroke-linecap="round" stroke-linejoin="round"/>
<rect x="1385.4" y="194.3" width="3.3" height="3.3" rx="0.9" fill="none" stroke="#1e1e1e" stroke-width="1.1"/>
<rect x="1391" y="193.5" width="5.7" height="5.2" rx="1.3" fill="none" stroke="#1e1e1e" stroke-width="1.15"/>
<path d="M1388.8 196H1391" fill="none" stroke="#1e1e1e" stroke-width="1.1" stroke-linecap="round" stroke-linejoin="round"/>
<path d="M1387.6 192.2V191.4C1387.6 190.7 1388.1 190.2 1388.8 190.2H1397.4C1398.1 190.2 1398.6 190.7 1398.6 191.4V194.6C1398.6 195.2 1398.3 195.6 1397.8 195.7" fill="none" stroke="#1e1e1e" stroke-width="1.1" stroke-linecap="round" stroke-linejoin="round"/>
<path d="M1363.5 211.1V218.7L1367.8 214.9Z" fill="none" stroke="#2b2b2b" stroke-width="1.1" stroke-linecap="round" stroke-linejoin="round"/>
<path d="M1386.4 209.8H1389.4C1389.9 209.8 1390.3 210 1390.6 210.4L1391.8 211.8H1397.2C1398 211.8 1398.6 212.4 1398.6 213.2V219.2C1398.6 220 1398 220.6 1397.2 220.6H1386.4C1385.6 220.6 1385 220 1385 219.2V211.2C1385 210.4 1385.6 209.8 1386.4 209.8Z" fill="none" stroke="#c48e1f" stroke-width="1.2" stroke-linecap="round" stroke-linejoin="round"/>
<path d="M1385.2 213.6H1389.6C1390.1 213.6 1390.5 213.4 1390.8 213L1391.8 211.9" fill="none" stroke="#c48e1f" stroke-width="1.1" stroke-linecap="round" stroke-linejoin="round"/>
<path d="M1369.5 230.6V237.2H1362.9Z" fill="#1e1e1e"/>
<path d="M1386.4 228.8H1389.4C1389.9 228.8 1390.3 229 1390.6 229.4L1391.8 230.8H1397.2C1398 230.8 1398.6 231.4 1398.6 232.2V238.2C1398.6 239 1398 239.6 1397.2 239.6H1386.4C1385.6 239.6 1385 239 1385 238.2V230.2C1385 229.4 1385.6 228.8 1386.4 228.8Z" fill="none" stroke="#c48e1f" stroke-width="1.2" stroke-linecap="round" stroke-linejoin="round"/>
<path d="M1385.2 232.6H1389.6C1390.1 232.6 1390.5 232.4 1390.8 232L1391.8 230.9" fill="none" stroke="#c48e1f" stroke-width="1.1" stroke-linecap="round" stroke-linejoin="round"/>
<path d="M1381.9 249.1V256.7L1386.2 252.9Z" fill="none" stroke="#2b2b2b" stroke-width="1.1" stroke-linecap="round" stroke-linejoin="round"/>
<path d="M1404.4 247.8H1407.4C1407.9 247.8 1408.3 248 1408.6 248.4L1409.8 249.8H1415.2C1416 249.8 1416.6 250.4 1416.6 251.2V257.2C1416.6 258 1416 258.6 1415.2 258.6H1404.4C1403.6 258.6 1403 258 1403 257.2V249.2C1403 248.4 1403.6 247.8 1404.4 247.8Z" fill="none" stroke="#c48e1f" stroke-width="1.2" stroke-linecap="round" stroke-linejoin="round"/>
<path d="M1403.2 251.6H1407.6C1408.1 251.6 1408.5 251.4 1408.8 251L1409.8 249.9" fill="none" stroke="#c48e1f" stroke-width="1.1" stroke-linecap="round" stroke-linejoin="round"/>
<path d="M1406.9 265.4H1411L1414.6 269V277C1414.6 277.8 1414 278.4 1413.2 278.4H1406.9C1406.1 278.4 1405.5 277.8 1405.5 277V266.8C1405.5 266 1406.1 265.4 1406.9 265.4Z" fill="none" stroke="#1e1e1e" stroke-width="1.2" stroke-linecap="round" stroke-linejoin="round"/>
<path d="M1410.8 265.6V269.2H1414.4" fill="none" stroke="#1e1e1e" stroke-width="1.1" stroke-linecap="round" stroke-linejoin="round"/>
<text x="1406.6" y="277.2" font-family="Liberation Sans, sans-serif" font-size="8.6" font-weight="bold" font-style="italic" fill="#c8102e">A</text>
<text x="1401.8" y="295" font-family="Liberation Sans, sans-serif" font-size="11" font-weight="normal" font-style="normal" fill="#d35f1f" textLength="16.6" lengthAdjust="spacingAndGlyphs">JSX</text>
<path d="M1406.9 303.4H1411L1414.6 307V315C1414.6 315.8 1414 316.4 1413.2 316.4H1406.9C1406.1 316.4 1405.5 315.8 1405.5 315V304.8C1405.5 304 1406.1 303.4 1406.9 303.4Z" fill="none" stroke="#1e1e1e" stroke-width="1.2" stroke-linecap="round" stroke-linejoin="round"/>
<path d="M1410.8 303.6V307.2H1414.4" fill="none" stroke="#1e1e1e" stroke-width="1.1" stroke-linecap="round" stroke-linejoin="round"/>
<text x="1406.6" y="315.2" font-family="Liberation Sans, sans-serif" font-size="8.6" font-weight="bold" font-style="italic" fill="#c8102e">A</text>
<text x="1401.8" y="333" font-family="Liberation Sans, sans-serif" font-size="11" font-weight="normal" font-style="normal" fill="#d35f1f" textLength="16.6" lengthAdjust="spacingAndGlyphs">JSX</text>
<path d="M1388.9 341.4H1393L1396.6 345V353C1396.6 353.8 1396 354.4 1395.2 354.4H1388.9C1388.1 354.4 1387.5 353.8 1387.5 353V342.8C1387.5 342 1388.1 341.4 1388.9 341.4Z" fill="none" stroke="#1e1e1e" stroke-width="1.2" stroke-linecap="round" stroke-linejoin="round"/>
<path d="M1392.8 341.6V345.2H1396.4" fill="none" stroke="#1e1e1e" stroke-width="1.1" stroke-linecap="round" stroke-linejoin="round"/>
<path d="M1387.5 367.4V361.8C1387.5 361 1388.1 360.4 1388.9 360.4H1393L1396.6 364V372C1396.6 372.8 1396 373.4 1395.2 373.4H1395.4" fill="none" stroke="#1e1e1e" stroke-width="1.2" stroke-linecap="round" stroke-linejoin="round"/>
<path d="M1392.8 360.6V364.2H1396.4" fill="none" stroke="#1e1e1e" stroke-width="1.1" stroke-linecap="round" stroke-linejoin="round"/>
<text x="1383.8" y="373.6" font-family="Liberation Sans, sans-serif" font-size="6.9" font-weight="bold" font-style="normal" fill="#1e1e1e" textLength="4.8" lengthAdjust="spacingAndGlyphs">M</text>
<path d="M1392.6 369.4V373.2M1390.7 371.5L1392.6 373.4L1394.5 371.5" fill="none" stroke="#1e1e1e" stroke-width="0.95" stroke-linecap="round" stroke-linejoin="round"/>
<text x="1385.6" y="390" font-family="Liberation Sans, sans-serif" font-size="11" font-weight="normal" font-style="normal" fill="#d35f1f" textLength="11.6" lengthAdjust="spacingAndGlyphs">JS</text>
<path d="M1387.5 405.4V399.8C1387.5 399 1388.1 398.4 1388.9 398.4H1393L1396.6 402V410C1396.6 410.8 1396 411.4 1395.2 411.4H1394.6" fill="none" stroke="#1e1e1e" stroke-width="1.2" stroke-linecap="round" stroke-linejoin="round"/>
<path d="M1392.8 398.6V402.2H1396.4" fill="none" stroke="#1e1e1e" stroke-width="1.1" stroke-linecap="round" stroke-linejoin="round"/>
<path d="M1385.8 407.8L1384 409.6L1385.8 411.4M1391.4 407.8L1393.2 409.6L1391.4 411.4" fill="none" stroke="#1e1e1e" stroke-width="1.0" stroke-linecap="round" stroke-linejoin="round"/>
<circle cx="1388.6" cy="409.6" r="1.3" fill="none" stroke="#0f74d4" stroke-width="1.1"/>
<path d="M1363.5 420.1V427.7L1367.8 423.9Z" fill="none" stroke="#2b2b2b" stroke-width="1.1" stroke-linecap="round" stroke-linejoin="round"/>
<path d="M1387.5 424.4V418.8C1387.5 418 1388.1 417.4 1388.9 417.4H1393L1396.6 421V429C1396.6 429.8 1396 430.4 1395.2 430.4H1394.6" fill="none" stroke="#1e1e1e" stroke-width="1.2" stroke-linecap="round" stroke-linejoin="round"/>
<path d="M1392.8 417.6V421.2H1396.4" fill="none" stroke="#1e1e1e" stroke-width="1.1" stroke-linecap="round" stroke-linejoin="round"/>
<path d="M1387 425.6C1386 425.6 1385.8 426 1385.8 426.8V427.4C1385.8 428 1385.4 428.3 1384.9 428.3C1385.4 428.3 1385.8 428.6 1385.8 429.2V429.8C1385.8 430.6 1386 431 1387 431" fill="none" stroke="#1e1e1e" stroke-width="1.0" stroke-linecap="round" stroke-linejoin="round"/>
<path d="M1389.6 425.6C1390.6 425.6 1390.8 426 1390.8 426.8V427.4C1390.8 428 1391.2 428.3 1391.7 428.3C1391.2 428.3 1390.8 428.6 1390.8 429.2V429.8C1390.8 430.6 1390.6 431 1389.6 431" fill="none" stroke="#1e1e1e" stroke-width="1.0" stroke-linecap="round" stroke-linejoin="round"/>
<path d="M1387.5 443.4V437.8C1387.5 437 1388.1 436.4 1388.9 436.4H1393L1396.6 440V448C1396.6 448.8 1396 449.4 1395.2 449.4H1395.4" fill="none" stroke="#1e1e1e" stroke-width="1.2" stroke-linecap="round" stroke-linejoin="round"/>
<path d="M1392.8 436.6V440.2H1396.4" fill="none" stroke="#1e1e1e" stroke-width="1.1" stroke-linecap="round" stroke-linejoin="round"/>
<text x="1383.8" y="449.6" font-family="Liberation Sans, sans-serif" font-size="6.9" font-weight="bold" font-style="normal" fill="#1e1e1e" textLength="4.8" lengthAdjust="spacingAndGlyphs">M</text>
<path d="M1392.6 445.4V449.2M1390.7 447.5L1392.6 449.4L1394.5 447.5" fill="none" stroke="#1e1e1e" stroke-width="0.95" stroke-linecap="round" stroke-linejoin="round"/>
<text x="1385.6" y="466" font-family="Liberation Sans, sans-serif" font-size="11" font-weight="normal" font-style="normal" fill="#d35f1f" textLength="11.6" lengthAdjust="spacingAndGlyphs">JS</text>
<path d="M1351.3 477.6V484.2H1344.7Z" fill="#1e1e1e"/>
<path d="M1369.2 480V476.8C1369.2 475.8 1370 475 1371 475H1378.4C1379.4 475 1380.2 475.8 1380.2 476.8V484C1380.2 485 1379.4 485.8 1378.4 485.8H1376" fill="none" stroke="#1e1e1e" stroke-width="1.2" stroke-linecap="round" stroke-linejoin="round"/>
<path d="M1369.4 478.2H1380" fill="none" stroke="#1e1e1e" stroke-width="1.1" stroke-linecap="round" stroke-linejoin="round"/>
<circle cx="1370.4" cy="484.8" r="4.1" fill="#0f74d4"/>
<path d="M1366.6 483.6H1374.2M1366.6 486H1374.2M1370.4 480.9V488.7M1368.6 481.4C1367.8 483.6 1367.8 486 1368.6 488.2M1372.2 481.4C1373 483.6 1373 486 1372.2 488.2" fill="none" stroke="#f6f6f6" stroke-width="0.75" stroke-linecap="round" stroke-linejoin="round"/>
<path d="M1363.5 496.1V503.7L1367.8 499.9Z" fill="none" stroke="#2b2b2b" stroke-width="1.1" stroke-linecap="round" stroke-linejoin="round"/>
<path d="M1390 503.4H1388.4C1386.6 503.4 1385.2 502.2 1385.2 500.4C1385.2 498.8 1386.4 497.6 1387.8 497.4C1388.2 495.2 1390 493.6 1392.2 493.6C1394.4 493.6 1396 495 1396.6 496.8C1397.2 496.8 1397.8 497 1398.2 497.4" fill="none" stroke="#2a86c7" stroke-width="1.1" stroke-linecap="round" stroke-linejoin="round"/>
<path d="M1391 506.8L1392.8 505" fill="none" stroke="#1f9a8c" stroke-width="1.2" stroke-linecap="round" stroke-linejoin="round"/>
<path d="M1392 503.2L1394.8 506L1396.4 504.4C1397.2 503.6 1397.2 502.6 1396.6 501.8L1398.8 499.6L1398.2 499L1396 501.2C1395.2 500.6 1394.2 500.8 1393.6 501.6Z" fill="#1f9a8c"/>
<path d="M1395.4 499.4L1397 497.8M1397.2 501.2L1399 499.4" fill="none" stroke="#1f9a8c" stroke-width="1.1" stroke-linecap="round" stroke-linejoin="round"/>
<path d="M1363.5 515.1V522.7L1367.8 518.9Z" fill="none" stroke="#2b2b2b" stroke-width="1.1" stroke-linecap="round" stroke-linejoin="round"/>
<rect x="1385.4" y="517.3" width="3.3" height="3.3" rx="0.9" fill="none" stroke="#1e1e1e" stroke-width="1.1"/>
<rect x="1391" y="516.5" width="5.7" height="5.2" rx="1.3" fill="none" stroke="#1e1e1e" stroke-width="1.15"/>
<path d="M1388.8 519H1391" fill="none" stroke="#1e1e1e" stroke-width="1.1" stroke-linecap="round" stroke-linejoin="round"/>
<path d="M1387.6 515.2V514.4C1387.6 513.7 1388.1 513.2 1388.8 513.2H1397.4C1398.1 513.2 1398.6 513.7 1398.6 514.4V517.6C1398.6 518.2 1398.3 518.6 1397.8 518.7" fill="none" stroke="#1e1e1e" stroke-width="1.1" stroke-linecap="round" stroke-linejoin="round"/>
<path d="M1363.5 534.1V541.7L1367.8 537.9Z" fill="none" stroke="#2b2b2b" stroke-width="1.1" stroke-linecap="round" stroke-linejoin="round"/>
<path d="M1387.4 533.2C1387.6 532.8 1388 532.6 1388.4 532.6H1390.4C1390.9 532.6 1391.3 532.8 1391.6 533.2L1392.8 534.6H1397.2C1398 534.6 1398.6 535.2 1398.6 536V542C1398.6 542.8 1398 543.4 1397.2 543.4H1393.6" fill="none" stroke="#c48e1f" stroke-width="1.2" stroke-linecap="round" stroke-linejoin="round"/>
<path d="M1390.2 535C1388.8 534.4 1387.2 534.8 1386.2 535.8C1385.2 536.8 1384.9 538.2 1385.3 539.4L1387.6 537.2L1389.4 539L1387.2 541.2C1388.2 541.6 1389.2 541.4 1390 541L1393.4 544.6C1394 545.2 1394.9 545.2 1395.4 544.6C1396 544 1396 543.2 1395.4 542.6L1391.8 539.2C1392.4 537.8 1392 536 1390.2 535Z" fill="#1a1a1a"/>
<path d="M1363.5 553.1V560.7L1367.8 556.9Z" fill="none" stroke="#2b2b2b" stroke-width="1.1" stroke-linecap="round" stroke-linejoin="round"/>
<circle cx="1392" cy="556.6" r="5.6" fill="none" stroke="#0f74d4" stroke-width="1.25"/>
<ellipse cx="1392" cy="556.6" rx="2.35" ry="5.6" fill="none" stroke="#0f74d4" stroke-width="1.12"/>
<path d="M1387.0 554.6H1397.0M1387.0 558.6H1397.0" fill="none" stroke="#0f74d4" stroke-width="1.12" stroke-linecap="round" stroke-linejoin="round"/>
<path d="M1363.5 572.1V579.7L1367.8 575.9Z" fill="none" stroke="#2b2b2b" stroke-width="1.1" stroke-linecap="round" stroke-linejoin="round"/>
<path d="M1386.4 570.8H1389.4C1389.9 570.8 1390.3 571 1390.6 571.4L1391.8 572.8H1397.2C1398 572.8 1398.6 573.4 1398.6 574.2V580.2C1398.6 581 1398 581.6 1397.2 581.6H1386.4C1385.6 581.6 1385 581 1385 580.2V572.2C1385 571.4 1385.6 570.8 1386.4 570.8Z" fill="none" stroke="#c48e1f" stroke-width="1.2" stroke-linecap="round" stroke-linejoin="round"/>
<path d="M1385.2 574.6H1389.6C1390.1 574.6 1390.5 574.4 1390.8 574L1391.8 572.9" fill="none" stroke="#c48e1f" stroke-width="1.1" stroke-linecap="round" stroke-linejoin="round"/>
<path d="M1363.5 591.1V598.7L1367.8 594.9Z" fill="none" stroke="#2b2b2b" stroke-width="1.1" stroke-linecap="round" stroke-linejoin="round"/>
<path d="M1387.5 595.4V589.8C1387.5 589 1388.1 588.4 1388.9 588.4H1393L1396.6 592V600C1396.6 600.8 1396 601.4 1395.2 601.4H1394.6" fill="none" stroke="#1e1e1e" stroke-width="1.2" stroke-linecap="round" stroke-linejoin="round"/>
<path d="M1392.8 588.6V592.2H1396.4" fill="none" stroke="#1e1e1e" stroke-width="1.1" stroke-linecap="round" stroke-linejoin="round"/>
<path d="M1387 596.6C1386 596.6 1385.8 597 1385.8 597.8V598.4C1385.8 599 1385.4 599.3 1384.9 599.3C1385.4 599.3 1385.8 599.6 1385.8 600.2V600.8C1385.8 601.6 1386 602 1387 602" fill="none" stroke="#1e1e1e" stroke-width="1.0" stroke-linecap="round" stroke-linejoin="round"/>
<path d="M1389.6 596.6C1390.6 596.6 1390.8 597 1390.8 597.8V598.4C1390.8 599 1391.2 599.3 1391.7 599.3C1391.2 599.3 1390.8 599.6 1390.8 600.2V600.8C1390.8 601.6 1390.6 602 1389.6 602" fill="none" stroke="#1e1e1e" stroke-width="1.0" stroke-linecap="round" stroke-linejoin="round"/>
<path d="M1387.5 614.4V608.8C1387.5 608 1388.1 607.4 1388.9 607.4H1393L1396.6 611V619C1396.6 619.8 1396 620.4 1395.2 620.4H1395.4" fill="none" stroke="#1e1e1e" stroke-width="1.2" stroke-linecap="round" stroke-linejoin="round"/>
<path d="M1392.8 607.6V611.2H1396.4" fill="none" stroke="#1e1e1e" stroke-width="1.1" stroke-linecap="round" stroke-linejoin="round"/>
<text x="1383.8" y="620.6" font-family="Liberation Sans, sans-serif" font-size="6.9" font-weight="bold" font-style="normal" fill="#1e1e1e" textLength="4.8" lengthAdjust="spacingAndGlyphs">M</text>
<path d="M1392.6 616.4V620.2M1390.7 618.5L1392.6 620.4L1394.5 618.5" fill="none" stroke="#1e1e1e" stroke-width="0.95" stroke-linecap="round" stroke-linejoin="round"/>
<path d="M1363.5 629.1V636.7L1367.8 632.9Z" fill="none" stroke="#2b2b2b" stroke-width="1.1" stroke-linecap="round" stroke-linejoin="round"/>
<text x="1384.8" y="636.8" font-family="Liberation Mono, sans-serif" font-size="11.6" font-weight="bold" font-style="normal" fill="#169212" textLength="14" lengthAdjust="spacingAndGlyphs">C#</text>
</svg>
</body>
</html>
